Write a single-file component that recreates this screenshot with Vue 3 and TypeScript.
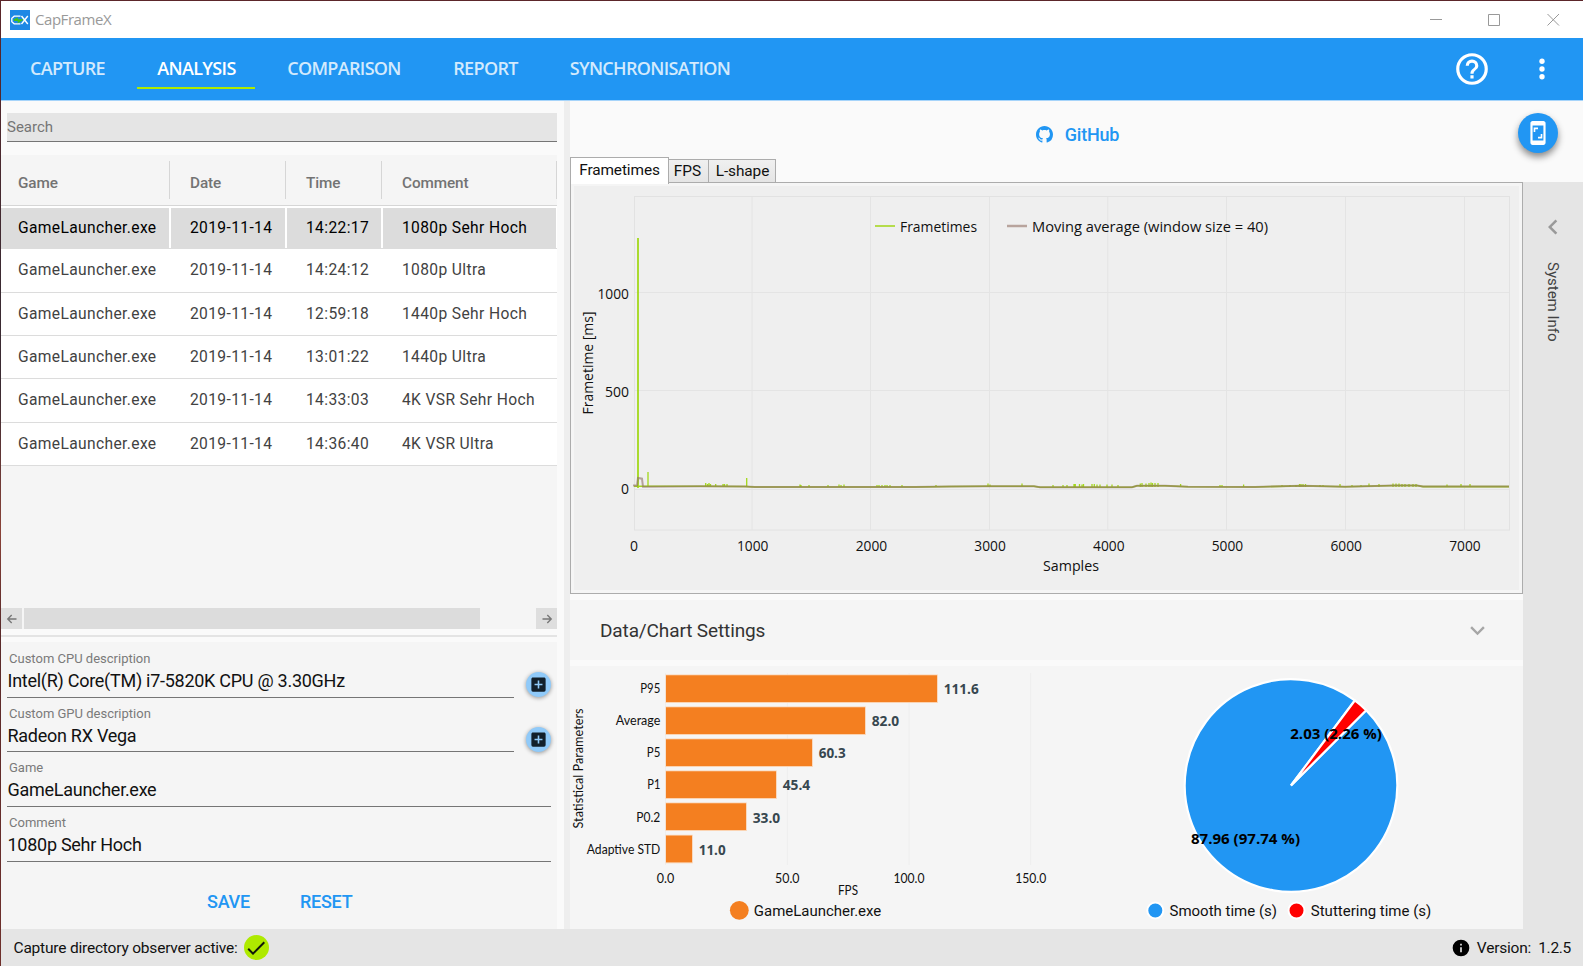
<script setup lang="ts">
interface Label { text: string; x: number; y: number; w: number }
interface RecordRow { game: string; date: string; time: string; comment: string }
interface Bar { name: string; value: string; top: number; base: number; w: number; nameW: number; valueW: number }

const navTabs: string[] = ['CAPTURE', 'ANALYSIS', 'COMPARISON', 'REPORT', 'SYNCHRONISATION']
const activeTab = 'ANALYSIS'

const columns: string[] = ['Game', 'Date', 'Time', 'Comment']
const game = 'GameLauncher.exe'
const date = '2019-11-14'
const records: RecordRow[] = [
  { game, date, time: '14:22:17', comment: '1080p Sehr Hoch' },
  { game, date, time: '14:24:12', comment: '1080p Ultra' },
  { game, date, time: '12:59:18', comment: '1440p Sehr Hoch' },
  { game, date, time: '13:01:22', comment: '1440p Ultra' },
  { game, date, time: '14:33:03', comment: '4K VSR Sehr Hoch' },
  { game, date, time: '14:36:40', comment: '4K VSR Ultra' },
]

const fields = [
  { label: 'Custom CPU description', value: 'Intel(R) Core(TM) i7-5820K CPU @ 3.30GHz', button: true },
  { label: 'Custom GPU description', value: 'Radeon RX Vega', button: true },
  { label: 'Game', value: 'GameLauncher.exe', button: false },
  { label: 'Comment', value: '1080p Sehr Hoch', button: false },
]

const gridX: number[] = [752, 870.5, 989.5, 1107.8, 1226.5, 1345.5, 1464.5]
const gridY: number[] = [292.5, 390.5, 489.5]
const xTicks: Label[] = ['0', '1000', '2000', '3000', '4000', '5000', '6000', '7000'].map((text, i) => ({
  text, x: 634 + i * 118.7, y: 550.5, w: i === 0 ? 8 : 31.5,
}))
const yTicks: Label[] = [
  { text: '1000', x: 629, y: 298.7, w: 31.5 },
  { text: '500', x: 629, y: 396.5, w: 24 },
  { text: '0', x: 629, y: 494.3, w: 8 },
]

// Short frametime spikes: [x, top]
const spikes: [number, number][] = [
  [648, 472], [746.7, 478], [705.7, 483], [707.5, 484], [709, 483], [710.5, 484], [715.7, 484], [723, 484], [724.5, 484],
  [727, 484], [800, 484.5], [801, 485], [809, 485], [828, 485], [839, 484.5], [841, 485], [844, 484.5], [877, 485],
  [879, 485], [882, 485], [885, 485], [887, 485], [890, 485], [902, 485], [936, 485], [988, 483.5], [990, 484.5],
  [1022, 483.5], [1053, 485], [1063, 485], [1067, 485], [1074, 484], [1075.3, 484], [1079.5, 484], [1082, 484.5],
  [1083.5, 484], [1092, 484], [1094.3, 484], [1097, 484.5], [1100, 484.5], [1107, 484.5], [1112, 484.5], [1118, 485],
  [1140.3, 483.5], [1142, 483], [1146, 483.5], [1149, 483], [1151, 482.5], [1152.5, 483], [1155, 483], [1158, 483],
  [1180.6, 484], [1220, 485], [1222, 485], [1243.6, 484.5], [1282, 485], [1290, 485], [1296, 485], [1299.5, 484],
  [1301, 484], [1303, 484], [1305.5, 484], [1320, 485], [1323, 485], [1340, 484], [1352, 485], [1361, 485], [1369, 483.5],
  [1379, 484], [1393, 483.5], [1396, 483.5], [1399, 483.5], [1402, 484], [1405, 484], [1409, 484], [1413, 484],
  [1416, 484], [1447, 484.5], [1461, 484], [1470, 484],
]
const spikePath = spikes.map(([x, y]) => `M${x} ${y}V487`).join('')
const steadyPath =
  'L700 486.2L745 486.5L755 487L915 487L950 486.5L985 486.2H1034L1040 487.2H1132L1137 485.8H1165L1188 486.8L1255 487L1302 485.8L1345 486.8L1395 485.5H1417L1423 486.6H1509'
const basePath = `M634 486.3H643${steadyPath}`
const averagePath = `M633 485.5H637L638 478L642 478.7L643 486.8${steadyPath}`

const bars: Bar[] = [
  { name: 'P95', value: '111.6', top: 675, base: 693.3, w: 271, nameW: 20, valueW: 35 },
  { name: 'Average', value: '82.0', top: 707, base: 725.3, w: 199, nameW: 44.5, valueW: 27.5 },
  { name: 'P5', value: '60.3', top: 739, base: 757.3, w: 146, nameW: 13.5, valueW: 27 },
  { name: 'P1', value: '45.4', top: 771, base: 789.3, w: 110, nameW: 13, valueW: 27.5 },
  { name: 'P0.2', value: '33.0', top: 803, base: 822, w: 80, nameW: 24, valueW: 27.5 },
  { name: 'Adaptive STD', value: '11.0', top: 835.3, base: 854.2, w: 26, nameW: 73.5, valueW: 27 },
]
const fpsTicks: Label[] = [
  { text: '0.0', x: 665.5, y: 883, w: 17.5 },
  { text: '50.0', x: 787.3, y: 883, w: 24.5 },
  { text: '100.0', x: 909, y: 883, w: 31 },
  { text: '150.0', x: 1030.7, y: 883, w: 31 },
]

const pie = { cx: 1291, cy: 785.5, r: 106.3 }
function slice(from: number, to: number): string {
  const at = (deg: number): string => {
    const a = (deg * Math.PI) / 180
    return `${pie.cx + pie.r * Math.sin(a)} ${pie.cy - pie.r * Math.cos(a)}`
  }
  const large = to - from > 180 ? 1 : 0
  return `M${pie.cx} ${pie.cy}L${at(from)}A${pie.r} ${pie.r} 0 ${large} 1 ${at(to)}Z`
}
const smoothSlice = slice(45, 396.9)
const stutterSlice = slice(36.9, 45)
</script>

<template>
  <div class="window">
    <header class="titlebar">
      <svg class="logo" width="20" height="20" viewBox="0 0 20 20">
        <rect width="20" height="20" fill="#1e88e5" />
        <path d="M10.5 6.2H4.2L1.8 8.2V11.8L4.2 13.8H10.5" fill="none" stroke="#fff" stroke-width="1.3" />
        <path d="M4 10.3l3-1.6V10h4.5l-3 1.8V10.3z" fill="#3fc21c" stroke="#3fc21c" stroke-width="1.6" />
        <path d="M11.5 6L17.8 14M17.8 6L11.5 14" stroke="#fff" stroke-width="1.4" />
      </svg>
      <span class="title">CapFrameX</span>
      <svg class="controls" width="130" height="14" viewBox="0 0 130 14" fill="none" stroke="#999" stroke-width="1">
        <path d="M0 6.5H12M58.5 1.5H69.5V12.5H58.5ZM117.5 1L129 12.5M129 1L117.5 12.5" />
      </svg>
    </header>

    <nav class="appbar">
      <div class="tabs">
        <button v-for="t in navTabs" :key="t" class="tab" :class="{ active: t === activeTab }">{{ t }}</button>
      </div>
      <svg class="help" width="38" height="38" viewBox="0 0 24 24" fill="#fff"><path d="M11,18H13V16H11V18M12,2A10,10 0 0,0 2,12A10,10 0 0,0 12,22A10,10 0 0,0 22,12A10,10 0 0,0 12,2M12,20C7.59,20 4,16.41 4,12C4,7.59 7.59,4 12,4C16.41,4 20,7.59 20,12C20,16.41 16.41,20 12,20M12,6A4,4 0 0,0 8,10H10A2,2 0 0,1 12,8A2,2 0 0,1 14,10C14,12 11,11.75 11,15H13C13,12.75 16,12.5 16,10A4,4 0 0,0 12,6Z" /></svg>
      <svg class="more" width="32" height="32" viewBox="0 0 24 24" fill="#fff"><circle cx="12" cy="6.2" r="2" /><circle cx="12" cy="12" r="2" /><circle cx="12" cy="17.8" r="2" /></svg>
    </nav>

    <main class="body">
      <section class="left">
        <div class="search">Search</div>

        <div class="records">
          <div class="row head">
            <div v-for="c in columns" :key="c" class="hcell">{{ c }}</div>
          </div>
          <div v-for="(r, i) in records" :key="r.time" class="row" :class="{ selected: i === 0 }">
            <div class="cell">{{ r.game }}</div>
            <div class="cell">{{ r.date }}</div>
            <div class="cell">{{ r.time }}</div>
            <div class="cell">{{ r.comment }}</div>
          </div>
          <div class="scrollbar">
            <div class="arrow">
              <svg width="12" height="12" viewBox="0 0 12 12" fill="none" stroke="#777" stroke-width="1.4"><path d="M10.5 6H2M5.7 2L1.8 6L5.7 10" /></svg>
            </div>
            <div class="thumb"></div>
            <div class="arrow end">
              <svg width="12" height="12" viewBox="0 0 12 12" fill="none" stroke="#777" stroke-width="1.4"><path d="M1.5 6H10M6.3 2L10.2 6L6.3 10" /></svg>
            </div>
          </div>
        </div>

        <div class="divider"></div>

        <div class="form">
          <div v-for="f in fields" :key="f.label" class="field-row">
            <div class="field">
              <div class="label">{{ f.label }}</div>
              <div class="value">{{ f.value }}</div>
            </div>
            <button v-if="f.button" class="add">
              <svg width="19" height="19" viewBox="0 0 24 24" fill="#12202b"><path d="M17,13H13V17H11V13H7V11H11V7H13V11H17M19,3H5C3.89,3 3,3.89 3,5V19A2,2 0 0,0 5,21H19A2,2 0 0,0 21,19V5C21,3.89 20.1,3 19,3Z" /></svg>
            </button>
          </div>
          <div class="actions">
            <button class="link">SAVE</button>
            <button class="link reset">RESET</button>
          </div>
        </div>
      </section>

      <div class="splitter"></div>

      <section class="right">
        <div class="github">
          <svg width="17" height="17" viewBox="0 0 16 16" fill="#2196f3"><path d="M8 0C3.58 0 0 3.58 0 8c0 3.54 2.29 6.53 5.47 7.59.4.07.55-.17.55-.38 0-.19-.01-.82-.01-1.49-2.01.37-2.53-.49-2.69-.94-.09-.23-.48-.94-.82-1.13-.28-.15-.68-.52-.01-.53.63-.01 1.08.58 1.23.82.72 1.21 1.87.87 2.33.66.07-.52.28-.87.51-1.07-1.78-.2-3.64-.89-3.64-3.95 0-.87.31-1.59.82-2.15-.08-.2-.36-1.02.08-2.12 0 0 .67-.21 2.2.82.64-.18 1.32-.27 2-.27.68 0 1.36.09 2 .27 1.53-1.04 2.2-.82 2.2-.82.44 1.1.16 1.92.08 2.12.51.56.82 1.27.82 2.15 0 3.07-1.87 3.75-3.65 3.95.29.25.54.73.54 1.48 0 1.07-.01 1.93-.01 2.2 0 .21.15.46.55.38A8.013 8.013 0 0 0 16 8c0-4.42-3.58-8-8-8z" /></svg>
          <span>GitHub</span>
        </div>
        <button class="fab">
          <svg width="26" height="26" viewBox="0 0 24 24" fill="#fff"><path d="M17 1.01L7 1c-1.1 0-2 .9-2 2v18c0 1.1.9 2 2 2h10c1.1 0 2-.9 2-2V3c0-1.1-.9-1.99-2-1.99zM17 19H7V5h10v14zm-1-6h-1.5v2.5H12V17h4v-4zm-6.5-4.5H12V7H8v4h1.5V8.5z" /></svg>
        </button>

        <div class="content">
          <div class="analysis">
            <div class="chart-tabs">
              <div class="chart-tab current">Frametimes</div>
              <div class="chart-tab fps">FPS</div>
              <div class="chart-tab lshape">L-shape</div>
            </div>
            <div class="chart-frame">
              <svg class="chart" width="945" height="404" viewBox="574 186 945 404">
                <g fill="none" stroke="#e4e4e4">
                  <rect x="634.5" y="196.5" width="875" height="333.5" stroke="#e2e2e2" />
                  <path v-for="x in gridX" :key="x" :d="`M${x} 197V530`" />
                  <path v-for="y in gridY" :key="y" :d="`M635 ${y}H1509`" />
                </g>
                <path :d="basePath" fill="none" stroke="#a4d61e" stroke-width="1.6" />
                <path d="M638 238V488" stroke="#a2d81a" stroke-width="1.8" />
                <path :d="spikePath" stroke="#a2d81a" stroke-width="1.3" />
                <path :d="averagePath" fill="none" stroke="#8d6e63" stroke-opacity="0.6" stroke-width="2" />
                <path d="M875 226H895" stroke="#b5dc4c" stroke-width="2" />
                <path d="M1007 226H1027" stroke="#b8a49d" stroke-width="2.5" />
                <g class="segoe">
                  <text x="900" y="232" textLength="77" lengthAdjust="spacingAndGlyphs">Frametimes</text>
                  <text x="1032" y="232" textLength="236" lengthAdjust="spacingAndGlyphs">Moving average (window size = 40)</text>
                  <text v-for="t in xTicks" :key="t.text" :x="t.x" :y="t.y" text-anchor="middle" :textLength="t.w" lengthAdjust="spacingAndGlyphs">{{ t.text }}</text>
                  <text v-for="t in yTicks" :key="t.text" :x="t.x" :y="t.y" text-anchor="end" :textLength="t.w" lengthAdjust="spacingAndGlyphs">{{ t.text }}</text>
                  <text x="1071" y="571" text-anchor="middle" textLength="56" lengthAdjust="spacingAndGlyphs">Samples</text>
                  <text transform="translate(593 363) rotate(-90)" text-anchor="middle" textLength="103" lengthAdjust="spacingAndGlyphs">Frametime [ms]</text>
                </g>
              </svg>
            </div>

            <div class="settings">
              <span>Data/Chart Settings</span>
              <svg width="29" height="29" viewBox="0 0 24 24" fill="#a6a6a6"><path d="M7.41,8.58L12,13.17L16.59,8.58L18,10L12,16L6,10L7.41,8.58Z" /></svg>
            </div>

            <div class="stats">
              <svg class="chart" width="953" height="263" viewBox="570 666 953 263">
                <path v-for="t in fpsTicks" :key="t.text" :d="`M${t.x} 673V865`" stroke="#eeeeee" />
                <g v-for="b in bars" :key="b.name">
                  <rect x="665.5" :y="b.top - 0.5" :width="b.w + 1.3" height="28.5" fill="#fbd3b1" />
                  <rect x="666" :y="b.top + 0.3" :width="b.w" height="26.7" fill="#f47f20" />
                  <text class="calibri" x="660.3" :y="b.base" text-anchor="end" :textLength="b.nameW" lengthAdjust="spacingAndGlyphs">{{ b.name }}</text>
                  <text class="bar-value" :x="672.7 + b.w" :y="b.base + 0.7" :textLength="b.valueW" lengthAdjust="spacingAndGlyphs">{{ b.value }}</text>
                </g>
                <g class="calibri">
                  <text v-for="t in fpsTicks" :key="t.text" :x="t.x" :y="t.y" text-anchor="middle" :textLength="t.w" lengthAdjust="spacingAndGlyphs">{{ t.text }}</text>
                  <text x="848" y="895" text-anchor="middle" textLength="20" lengthAdjust="spacingAndGlyphs">FPS</text>
                  <text transform="translate(583.3 768.5) rotate(-90)" text-anchor="middle" textLength="120" lengthAdjust="spacingAndGlyphs">Statistical Parameters</text>
                </g>
                <circle cx="739.3" cy="910.3" r="9.4" fill="#f47f20" />

                <path :d="smoothSlice" fill="#2196f3" stroke="#fff" stroke-width="2.2" />
                <path :d="stutterSlice" fill="#ff0000" stroke="#fff" stroke-width="2.2" />
                <g class="pie-label">
                  <text x="1290.3" y="739" textLength="91.5" lengthAdjust="spacingAndGlyphs">2.03 (2.26 %)</text>
                  <text x="1191" y="844" textLength="109" lengthAdjust="spacingAndGlyphs">87.96 (97.74 %)</text>
                </g>
                <circle cx="1155.3" cy="910.5" r="8" fill="#2196f3" stroke="#fff" stroke-width="2" />
                <circle cx="1296.5" cy="910.5" r="8" fill="#ff0000" stroke="#fff" stroke-width="2" />
                <g class="legend">
                  <text x="753.8" y="916" textLength="127.5" lengthAdjust="spacingAndGlyphs">GameLauncher.exe</text>
                  <text x="1169.5" y="916" textLength="107.5" lengthAdjust="spacingAndGlyphs">Smooth time (s)</text>
                  <text x="1310.8" y="916" textLength="120.5" lengthAdjust="spacingAndGlyphs">Stuttering time (s)</text>
                </g>
              </svg>
            </div>
          </div>

          <aside class="sidebar">
            <svg width="30" height="30" viewBox="0 0 24 24" fill="#999"><path d="M15.41,16.58L10.83,12L15.41,7.41L14,6L8,12L14,18L15.41,16.58Z" /></svg>
            <span>System Info</span>
          </aside>
        </div>
      </section>
    </main>

    <footer class="status">
      <span class="observer">Capture directory observer active:</span>
      <span class="ok">
        <svg width="24" height="24" viewBox="0 0 24 24" fill="#10180a"><path d="M21,7L9,19L3.5,13.5L4.91,12.09L9,16.17L19.59,5.59L21,7Z" /></svg>
      </span>
      <svg class="info" width="20" height="20" viewBox="0 0 24 24" fill="#000"><path d="M13,9H11V7H13M13,17H11V11H13M12,2A10,10 0 0,0 2,12A10,10 0 0,0 12,22A10,10 0 0,0 22,12A10,10 0 0,0 12,2Z" /></svg>
      <span class="version">Version:</span>
      <span class="number">1.2.5</span>
    </footer>
  </div>
</template>

<style>
html, body { margin: 0; overflow: hidden; }
</style>

<style scoped>
.window {
  box-sizing: border-box;
  width: 1583px;
  height: 966px;
  padding: 1px 0 0 1px;
  display: flex;
  flex-direction: column;
  overflow: hidden;
  background: linear-gradient(to bottom, #5c262a, #3a2a32 30%, #3a2a32 40%, #8a4238 55%, #5a2a2a 65%, #6e2f2b);
  font-family: Roboto, "Liberation Sans", sans-serif;
  color: #111;
}
button { border: 0; padding: 0; margin: 0; background: none; font-family: inherit; }
svg { display: block; flex: none; }

.titlebar {
  height: 37px;
  flex: none;
  display: flex;
  align-items: center;
  padding-left: 9px;
  background: #fff;
}
.title {
  margin: -2px 0 0 5px;
  font: 15px/20px "Open Sans", "Noto Sans", sans-serif;
  letter-spacing: -0.45px;
  color: #999;
}
.controls { margin-left: auto; margin-right: 23px; }

.appbar {
  box-sizing: border-box;
  height: 62px;
  flex: none;
  display: flex;
  align-items: flex-start;
  background: #2196f3;
  box-shadow: 0 1px 0 #a6d4fa;
  position: relative;
}
.tabs {
  display: grid;
  grid-template-columns: 115px 118px 153px 104px 201px;
  column-gap: 12px;
  margin-left: 9px;
}
.tab {
  height: 51px;
  padding: 10px 0 0 1px;
  box-sizing: border-box;
  border-bottom: 2px solid transparent;
  font: 600 18px/24px "Open Sans", "Noto Sans", sans-serif;
  letter-spacing: -0.67px;
  color: #d3eafd;
  white-space: nowrap;
}
.tab:first-child { padding-left: 0; }
.tab:nth-child(n + 4) { padding-left: 3px; }
.tab.active { color: #fff; border-bottom-color: #aeea00; }
.help { margin: 12px 0 0 auto; }
.more { margin: 15px 25px 0 35px; }

.body { flex: 1; display: flex; min-height: 0; background: #fafafa; }
.left { width: 563px; flex: none; display: flex; flex-direction: column; }
.splitter { width: 6px; flex: none; background: #eee; }

.search {
  box-sizing: border-box;
  width: 550px;
  height: 29px;
  margin: 13px 0 13px 6px;
  border-bottom: 1px solid #757575;
  background: #e5e5e5;
  font-size: 15px;
  line-height: 28px;
  color: #757575;
}

.records { width: 556px; height: 474px; flex: none; display: flex; flex-direction: column; background: #f5f5f5; }
.row {
  box-sizing: border-box;
  display: grid;
  grid-template-columns: 169px 116px 96px 175px;
  height: 43.33px;
  border-bottom: 1px solid #dcdcdc;
  background: #fff;
}
.head { height: 51px; background: #f5f5f5; border-bottom-color: #d6d6d6; }
.hcell {
  box-sizing: border-box;
  height: 38px;
  margin-top: 6px;
  padding-left: 20px;
  border-right: 1px solid #d6d6d6;
  font-size: 15.3px;
  font-weight: 500;
  line-height: 45px;
  letter-spacing: -0.1px;
  color: #737373;
}
.cell {
  padding-left: 20px;
  font-size: 15.6px;
  line-height: 43.4px;
  letter-spacing: 0.36px;
  color: #424242;
  white-space: nowrap;
}
.hcell:first-child, .cell:first-child { padding-left: 17px; }
.selected .cell {
  margin: 2px 1px 1px 1px;
  padding-left: 19px;
  line-height: 40px;
  background: #dcdcdc;
  color: #000;
}
.selected .cell:first-child { margin-left: 0; padding-left: 17px; }

.scrollbar { display: flex; height: 21px; margin-top: auto; }
.arrow { width: 21px; display: flex; align-items: center; justify-content: center; background: #dedede; }
.thumb { width: 456px; margin-left: 2px; background: #dcdcdc; }
.end { margin-left: auto; }

.divider {
  box-sizing: border-box;
  width: 556px;
  height: 7.6px;
  margin-bottom: 5.4px;
  border-bottom: 2px solid #e4e4e4;
}

.form { width: 556px; flex: 1; padding-top: 1.3px; box-sizing: border-box; background: #f5f5f5; }
.field-row { display: flex; height: 54.6px; padding: 0 11px 0 6px; }
.field-row:nth-child(n + 3) { padding-right: 6px; }
.field { flex: 1; box-sizing: border-box; padding-top: 8px; border-bottom: 1px solid #757575; }
.label { padding-left: 2px; font-size: 13px; line-height: 16px; color: #7a7a7a; }
.value { padding: 2px 0 0 0.5px; font-size: 18px; line-height: 24px; letter-spacing: -0.27px; color: #111; white-space: nowrap; }
.add {
  width: 25px;
  height: 25px;
  margin: 29px -5px 0 12px;
  border-radius: 50%;
  background: #90caf9;
  box-shadow: 0 1px 4px rgba(0, 0, 0, 0.4);
  display: flex;
  align-items: center;
  justify-content: center;
}
.actions { display: flex; padding: 28px 0 0 206px; }
.link { font-size: 18px; font-weight: 500; line-height: 24px; letter-spacing: -0.25px; color: #2196f3; }
.reset { margin-left: 50px; }

.right { position: relative; flex: 1; display: flex; flex-direction: column; }
.github {
  height: 46px;
  padding: 11px 0 0 2px;
  display: flex;
  align-items: center;
  justify-content: center;
  gap: 12px;
  font-size: 18px;
  font-weight: 500;
  letter-spacing: -0.2px;
  color: #2196f3;
}
.fab {
  position: absolute;
  top: 13px;
  right: 25px;
  width: 40px;
  height: 40px;
  border-radius: 50%;
  background: #2196f3;
  box-shadow: 0 4px 7px rgba(0, 0, 0, 0.45);
  display: flex;
  align-items: center;
  justify-content: center;
}
.content { flex: 1; display: flex; }
.analysis { width: 953px; display: flex; flex-direction: column; }

.chart-tabs { display: flex; align-items: flex-end; height: 25px; }
.chart-tab {
  box-sizing: border-box;
  height: 23px;
  border: 1px solid #acacac;
  border-bottom: 0;
  background: linear-gradient(#f0f0f0, #e5e5e5);
  font-size: 15.4px;
  line-height: 22px;
  text-align: center;
}
.current {
  position: relative;
  width: 99px;
  height: 27px;
  margin-bottom: -2px;
  background: #fff;
  line-height: 25px;
  letter-spacing: -0.1px;
}
.fps { width: 40px; border-left: 0; padding-right: 2px; }
.lshape { width: 68px; margin-left: -1px; padding-left: 1px; letter-spacing: -0.1px; }
.chart-frame {
  box-sizing: border-box;
  height: 412px;
  border: 1px solid #acacac;
  background: #f5f5f5;
  padding: 3px;
}
.chart-frame .chart { background: #efefef; }
.segoe { font: 15px "Open Sans", "Noto Sans", sans-serif; fill: #111; }
.calibri { font: 13.5px Lato, "Open Sans", sans-serif; fill: #111; }
.bar-value { font: 700 14px "Open Sans", "Noto Sans", sans-serif; fill: #37474f; }
.pie-label { font: 700 14.5px "Open Sans", "Noto Sans", sans-serif; fill: #000; }
.legend { font: 15.5px Roboto, sans-serif; fill: #111; }

.settings {
  box-sizing: border-box;
  height: 60px;
  margin: 6px 0;
  padding: 0 31px 0 30px;
  display: flex;
  align-items: center;
  justify-content: space-between;
  background: #f5f5f5;
  font-size: 19px;
  letter-spacing: -0.12px;
  color: #333;
}
.stats { height: 263px; background: #f5f5f5; }

.sidebar {
  flex: 1;
  margin-top: 25px;
  padding-top: 30px;
  display: flex;
  flex-direction: column;
  align-items: center;
  background: #e5e5e5;
}
.sidebar span {
  margin: 20px 1px 0 0;
  writing-mode: vertical-rl;
  font-size: 15px;
  line-height: 18px;
  color: #424242;
}

.status {
  height: 37px;
  flex: none;
  display: flex;
  align-items: center;
  background: #e5e5e5;
  font-size: 15.5px;
  letter-spacing: -0.2px;
}
.observer { margin-left: 12.5px; }
.ok {
  width: 25px;
  height: 25px;
  margin-left: 6px;
  border-radius: 50%;
  background: #aeea00;
  display: flex;
  align-items: center;
  justify-content: center;
}
.info { margin-left: auto; }
.version { margin-left: 6px; }
.number { margin: 0 12px 0 7px; letter-spacing: -0.3px; }
</style>
